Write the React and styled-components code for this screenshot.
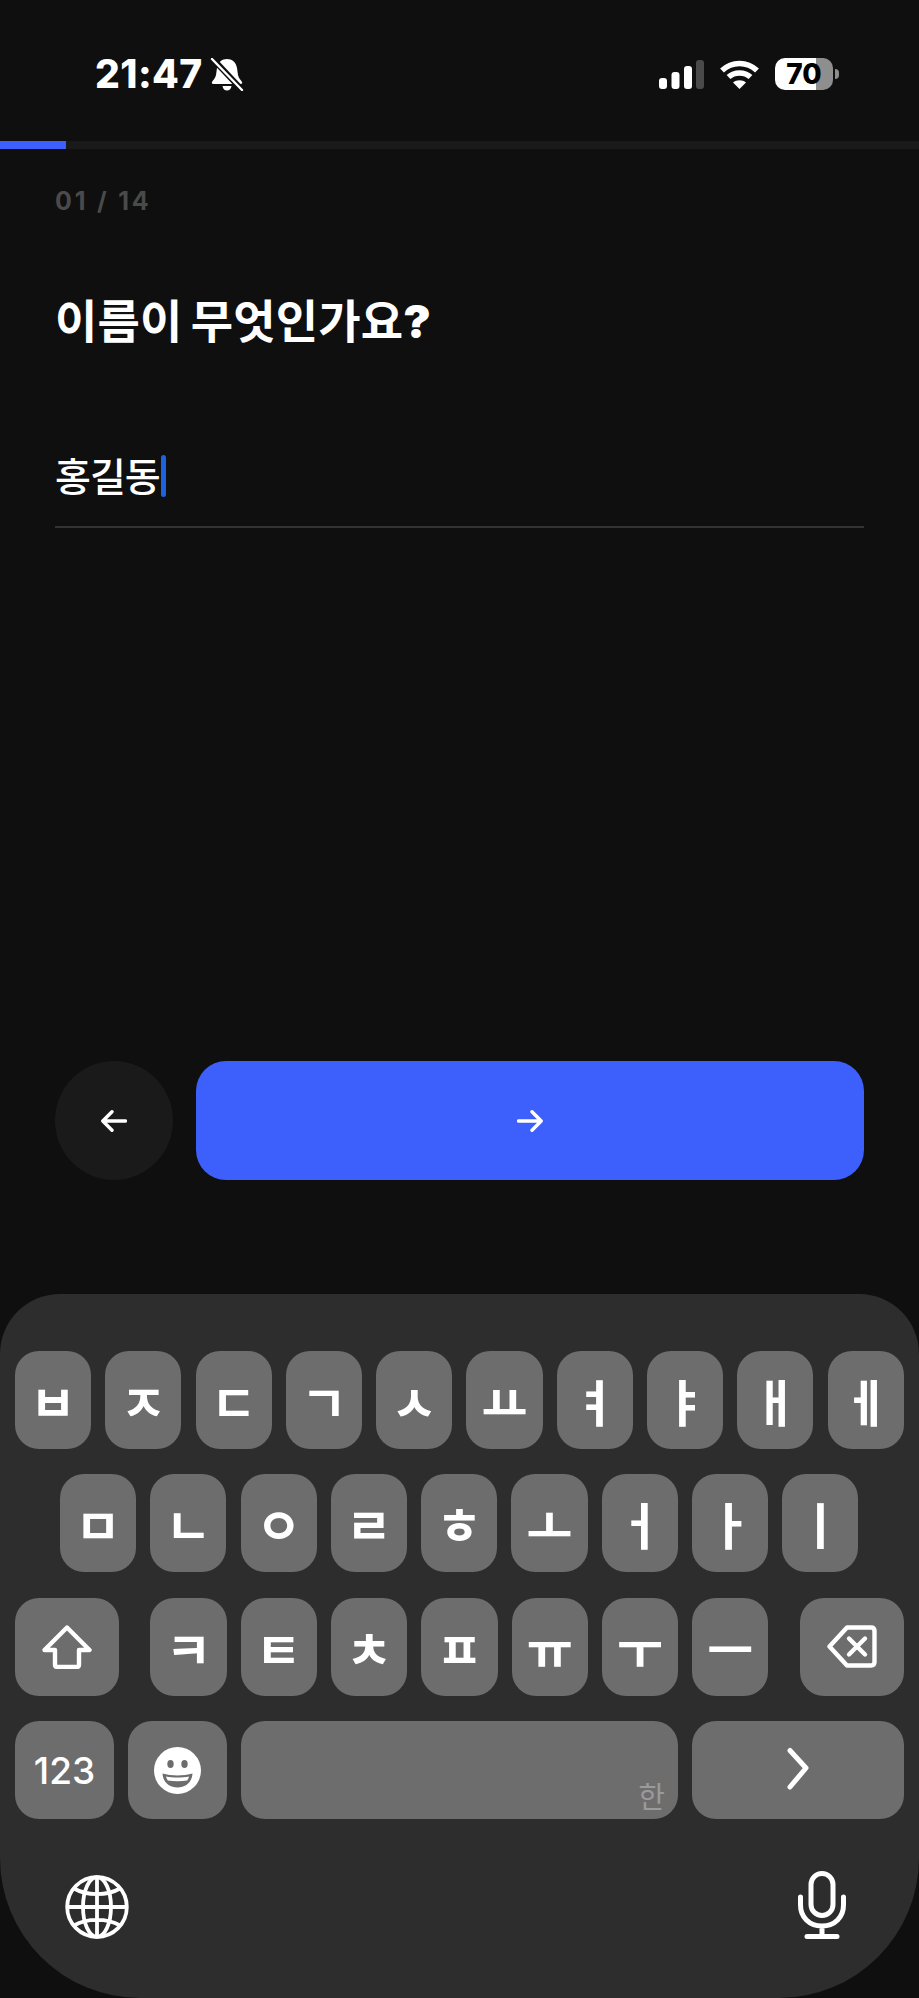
import React from 'react'
import styled, { createGlobalStyle } from 'styled-components'

const GlobalStyle = createGlobalStyle`
  html, body { margin: 0; padding: 0; background: #0f0f0f; }
  * { box-sizing: border-box; }
`

const Page = styled.div`
  width: 919px;
  height: 1998px;
  display: flex;
  flex-direction: column;
  background: #0f0f0f;
  color: #fff;
  font-family: Inter, "Noto Sans CJK KR", sans-serif;
  overflow: hidden;
`
const StatusBar = styled.div`
  height: 141px;
  padding: 58px 86px 0 95px;
  display: flex;
  justify-content: space-between;
  align-items: flex-start;
`
const StatusLeft = styled.div`
  display: flex;
  align-items: center;
  gap: 7px;
  height: 32px;
`
const Time = styled.span`
  font-size: 39px;
  font-weight: 800;
  line-height: 32px;
  letter-spacing: 0.4px;
`
const StatusRight = styled.div`
  display: flex;
  align-items: center;
  gap: 16px;
  height: 32px;
`
const Battery = styled.div`
  width: 58px;
  height: 32px;
  border-radius: 10px;
  background: linear-gradient(90deg, #fff 0 41px, #8e8e8e 41px);
  color: #000;
  font-size: 28px;
  font-weight: 800;
  line-height: 32px;
  text-align: center;
  position: relative;
  &::after {
    content: '';
    position: absolute;
    right: -6px;
    top: 11px;
    width: 4px;
    height: 10px;
    border-radius: 0 5px 5px 0;
    background: #8e8e8e;
  }
`
const Track = styled.div`
  height: 8px;
  background: #1a1a1a;
`
const TrackFill = styled.div`
  height: 100%;
  background: #3d5ffb;
`
const Content = styled.div`
  flex: 1;
  padding: 37px 55px 0;
  display: flex;
  flex-direction: column;
`
const Counter = styled.div`
  font-size: 25px;
  font-weight: 700;
  line-height: 30px;
  letter-spacing: 2.8px;
  color: #4a4a4a;
`
const Title = styled.h1`
  margin: 75px 0 0;
  font-size: 46px;
  font-weight: 700;
  line-height: 60px;
  letter-spacing: 0.2px;
  word-spacing: -3px;
`
const HeavyMark = styled.span`
  font-weight: 900;
`
const NameField = styled.div`
  margin-top: 99px;
  height: 78px;
  border-bottom: 2px solid #333;
  display: flex;
  align-items: flex-start;
  font-size: 39px;
  font-weight: 500;
  line-height: 54px;
  letter-spacing: -1px;
`
const Caret = styled.span`
  width: 5px;
  height: 42px;
  margin: 5px 0 0 1px;
  border-radius: 2.5px;
  background: #1f62e0;
`
const Actions = styled.div`
  margin-top: auto;
  margin-bottom: 114px;
  display: flex;
  gap: 23px;
`
const BackButton = styled.div`
  width: 118px;
  height: 119px;
  border-radius: 50%;
  background: #1a1a1a;
  display: flex;
  align-items: center;
  justify-content: center;
`
const NextButton = styled.div`
  flex: 1;
  height: 119px;
  border-radius: 30px;
  background: #3d5ffb;
  display: flex;
  align-items: center;
  justify-content: center;
`
const Keyboard = styled.div`
  height: 704px;
  padding: 57px 15px 0;
  border-radius: 60px 60px 140px 140px;
  background: #2d2d2d;
`
const KeyRow = styled.div`
  display: flex;
  gap: ${p => p.$gap || 14.1}px;
  padding: 0 ${p => p.$inset || 0}px;
  margin-bottom: 25.4px;
`
const Key = styled.div`
  width: ${p => p.$w || 76.2}px;
  height: 98px;
  flex: none;
  border-radius: 24px;
  background: #6d6d6d;
  display: flex;
  align-items: center;
  justify-content: center;
  font-family: "Noto Sans CJK KR", sans-serif;
  font-size: 50px;
  font-weight: 700;
  line-height: 1;
  color: #fff;
`
const SpaceKey = styled(Key)`
  align-items: flex-end;
  justify-content: flex-end;
  padding: 0 13px 9px 0;
  font-size: 29px;
  font-weight: 400;
  color: #9a9a9a;
`
const NumberKey = styled(Key)`
  font-family: Inter, sans-serif;
  font-size: 37px;
  font-weight: 500;
`
const Row3Keys = styled.div`
  display: flex;
  gap: 14.1px;
  margin: 0 17.4px;
`
const BottomIcons = styled.div`
  display: flex;
  justify-content: space-between;
  align-items: flex-end;
  padding: 26px 58px 0 50px;
`

const Bell = () => (
  <svg width="34" height="33" viewBox="0 0 34 33">
    <path fill="#fff" d="M17 1c5 0 9 3 10 9l1 7c.4 3 3 5 4 7 .5 1 0 2-1.500 2H3.500C2 26 1.500 25 2 24c1-2 3.600-4 4-7l1-7c1-6 5-9 10-9zM12.500 28h9c-.5 3-2.200 4.500-4.500 4.500S13 31 12.500 28z" />
    <path stroke="#0f0f0f" strokeWidth="6" d="M1 -1L33 33" />
    <path stroke="#fff" strokeWidth="2.400" strokeLinecap="round" d="M2 1L32 32" />
  </svg>
)

const Signal = () => (
  <svg width="45" height="29" viewBox="0 0 45 29" fill="#fff">
    <rect x="0" y="18" width="8" height="11" rx="3" />
    <rect x="12.500" y="12" width="8" height="17" rx="3" />
    <rect x="25" y="6" width="8" height="23" rx="3" />
    <rect x="37" y="0" width="8" height="29" rx="3" fill="#4a4a4a" />
  </svg>
)

const Wifi = () => (
  <svg width="39" height="29" viewBox="0 0 39 29" fill="none" stroke="#fff" strokeWidth="5.500">
    <path d="M2 10.500C12 1 27 1 37 10.500" />
    <path d="M8.500 17C14.500 11.500 24.500 11.500 30.500 17" />
    <path fill="#fff" stroke="none" d="M13 22.500c3.500-3 9.500-3 13 0L19.500 29z" />
  </svg>
)

const ArrowLeft = () => (
  <svg width="26" height="22" viewBox="0 0 26 22" fill="none" stroke="#fff" strokeWidth="3.400" strokeLinecap="round" strokeLinejoin="round">
    <path d="M24.500 11H2M11 1.800L1.800 11 11 20.200" />
  </svg>
)

const ArrowRight = () => (
  <svg width="26" height="22" viewBox="0 0 26 22" fill="none" stroke="#fff" strokeWidth="3.400" strokeLinecap="round" strokeLinejoin="round">
    <path d="M1.500 11H24M15 1.800L24.200 11 15 20.200" />
  </svg>
)

const Shift = () => (
  <svg width="50" height="44" viewBox="0 0 50 44" fill="none" stroke="#fff" strokeWidth="4.400" strokeLinejoin="round">
    <path d="M25 2.500L47.500 25H37V39.500Q37 42 34.500 42H15.500Q13 42 13 39.500V25H2.500z" />
  </svg>
)

const Delete = () => (
  <svg width="50" height="43" viewBox="0 0 50 43" fill="none" stroke="#fff" strokeWidth="4.400" strokeLinecap="round" strokeLinejoin="round">
    <path d="M20 2.500H44Q47.500 2.500 47.500 6V37Q47.500 40.500 44 40.500H20L2.500 21.500z" />
    <path d="M22 13.500L38 29.500M38 13.500L22 29.500" />
  </svg>
)

const Emoji = () => (
  <svg width="47" height="47" viewBox="0 0 47 47">
    <circle cx="23.500" cy="23.500" r="23.500" fill="#fff" />
    <ellipse cx="16.500" cy="17" rx="3.200" ry="4" fill="#6d6d6d" />
    <ellipse cx="30.500" cy="17" rx="3.200" ry="4" fill="#6d6d6d" />
    <path fill="#6d6d6d" d="M8.500 26.500C17 29 30 29 38.500 26.500 38 35 32 40.500 23.500 40.500S9 35 8.500 26.500z" />
    <path fill="#fff" d="M12 29.500c7 1.400 16 1.400 23 0-.5 1.800-1 3-1.800 4-6 1-13.400 1-19.400 0-.8-1-1.300-2.200-1.800-4z" />
  </svg>
)

const Chevron = () => (
  <svg width="24" height="46" viewBox="0 0 24 46" fill="none" stroke="#fff" strokeWidth="5" strokeLinecap="round" strokeLinejoin="round">
    <path d="M4 3.500L20 21 4 40" />
  </svg>
)

const Globe = () => (
  <svg width="64" height="64" viewBox="0 0 64 64" fill="none" stroke="#fff" strokeWidth="3.800">
    <circle cx="32" cy="32" r="29.800" />
    <ellipse cx="32" cy="32" rx="14" ry="29.800" />
    <path d="M32 2V62M2 32H62M9 13.500C22 21 42 21 55 13.500M9 50.500C22 43 42 43 55 50.500" />
  </svg>
)

const Mic = () => (
  <svg width="48" height="68" viewBox="0 0 48 68" fill="none" stroke="#fff" strokeWidth="5" strokeLinecap="round">
    <rect x="13" y="2.500" width="22" height="42" rx="11" />
    <path d="M2.500 26V34C2.500 46 11 55 24 55S45.500 46 45.500 34V26M24 55V65M9 65.500H39" />
  </svg>
)

const row1 = ['ㅂ', 'ㅈ', 'ㄷ', 'ㄱ', 'ㅅ', 'ㅛ', 'ㅕ', 'ㅑ', 'ㅐ', 'ㅔ']
const row2 = ['ㅁ', 'ㄴ', 'ㅇ', 'ㄹ', 'ㅎ', 'ㅗ', 'ㅓ', 'ㅏ', 'ㅣ']
const row3 = ['ㅋ', 'ㅌ', 'ㅊ', 'ㅍ', 'ㅠ', 'ㅜ', 'ㅡ']

export default function App() {
  return (
    <>
      <GlobalStyle />
      <Page>
        <StatusBar>
          <StatusLeft>
            <Time>21:47</Time>
            <Bell />
          </StatusLeft>
          <StatusRight>
            <Signal />
            <Wifi />
            <Battery>70</Battery>
          </StatusRight>
        </StatusBar>
        <Track>
          <TrackFill style={{ width: `${(1 / 14) * 100}%` }} />
        </Track>
        <Content>
          <Counter>01 / 14</Counter>
          <Title>이름이 무엇인가요<HeavyMark>?</HeavyMark></Title>
          <NameField>
            홍길동
            <Caret />
          </NameField>
          <Actions>
            <BackButton><ArrowLeft /></BackButton>
            <NextButton><ArrowRight /></NextButton>
          </Actions>
        </Content>
        <Keyboard>
          <KeyRow>
            {row1.map(k => <Key key={k}>{k}</Key>)}
          </KeyRow>
          <KeyRow $inset={45}>
            {row2.map(k => <Key key={k}>{k}</Key>)}
          </KeyRow>
          <KeyRow>
            <Key $w={104}><Shift /></Key>
            <Row3Keys>
              {row3.map(k => <Key key={k}>{k}</Key>)}
            </Row3Keys>
            <Key $w={104}><Delete /></Key>
          </KeyRow>
          <KeyRow $gap={14}>
            <NumberKey $w={99}>123</NumberKey>
            <Key $w={99}><Emoji /></Key>
            <SpaceKey $w={437}>한</SpaceKey>
            <Key $w={212}><Chevron /></Key>
          </KeyRow>
          <BottomIcons>
            <Globe />
            <Mic />
          </BottomIcons>
        </Keyboard>
      </Page>
    </>
  )
}
